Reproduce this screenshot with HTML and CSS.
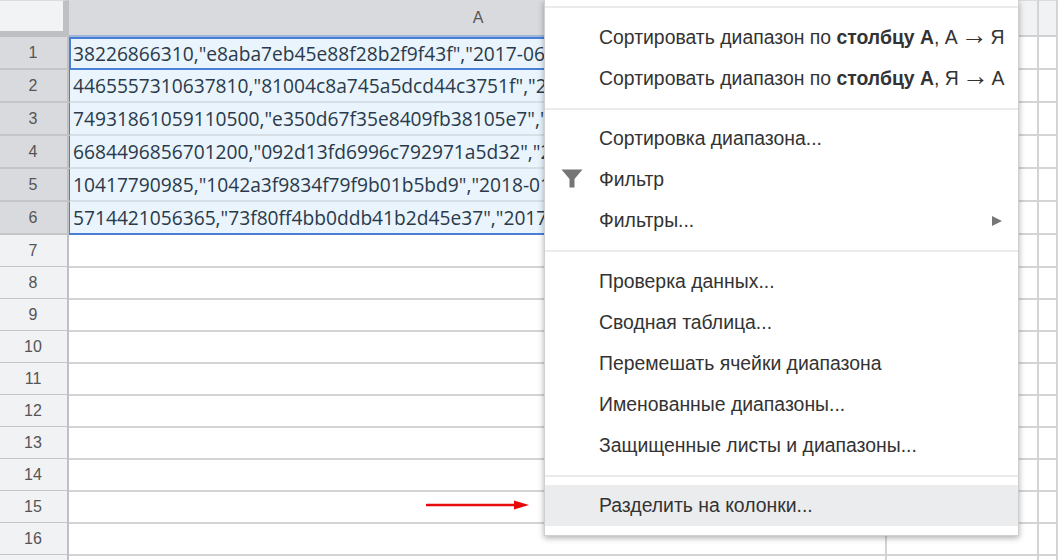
FILE: index.html
```html
<!DOCTYPE html>
<html lang="ru">
<head>
<meta charset="utf-8">
<title>Таблица</title>
<link rel="stylesheet" href="styles.css">
</head>
<body>
<div class="sheet">
  <div class="row row-head">
    <div class="corner"></div>
    <div class="col-head col-a selected">A</div>
    <div class="col-head col-b"></div>
    <div class="col-head col-c"></div>
  </div>
  <div class="row tall"><div class="num selected">1</div><div class="cell col-a sel active">38226866310,"e8aba7eb45e88f28b2f9f43f","2017-06</div><div class="cell col-b"></div><div class="cell col-c"></div></div>
  <div class="row tall"><div class="num selected">2</div><div class="cell col-a sel">4465557310637810,"81004c8a745a5dcd44c3751f","2</div><div class="cell col-b"></div><div class="cell col-c"></div></div>
  <div class="row tall"><div class="num selected">3</div><div class="cell col-a sel">74931861059110500,"e350d67f35e8409fb38105e7","</div><div class="cell col-b"></div><div class="cell col-c"></div></div>
  <div class="row tall"><div class="num selected">4</div><div class="cell col-a sel">6684496856701200,"092d13fd6996c792971a5d32","2</div><div class="cell col-b"></div><div class="cell col-c"></div></div>
  <div class="row tall"><div class="num selected">5</div><div class="cell col-a sel">10417790985,"1042a3f9834f79f9b01b5bd9","2018-01</div><div class="cell col-b"></div><div class="cell col-c"></div></div>
  <div class="row tall"><div class="num selected">6</div><div class="cell col-a sel last">5714421056365,"73f80ff4bb0ddb41b2d45e37","2017</div><div class="cell col-b"></div><div class="cell col-c"></div></div>
  <div class="row"><div class="num">7</div><div class="cell col-a"></div><div class="cell col-b"></div><div class="cell col-c"></div></div>
  <div class="row"><div class="num">8</div><div class="cell col-a"></div><div class="cell col-b"></div><div class="cell col-c"></div></div>
  <div class="row"><div class="num">9</div><div class="cell col-a"></div><div class="cell col-b"></div><div class="cell col-c"></div></div>
  <div class="row"><div class="num">10</div><div class="cell col-a"></div><div class="cell col-b"></div><div class="cell col-c"></div></div>
  <div class="row"><div class="num">11</div><div class="cell col-a"></div><div class="cell col-b"></div><div class="cell col-c"></div></div>
  <div class="row"><div class="num">12</div><div class="cell col-a"></div><div class="cell col-b"></div><div class="cell col-c"></div></div>
  <div class="row"><div class="num">13</div><div class="cell col-a"></div><div class="cell col-b"></div><div class="cell col-c"></div></div>
  <div class="row"><div class="num">14</div><div class="cell col-a"></div><div class="cell col-b"></div><div class="cell col-c"></div></div>
  <div class="row"><div class="num">15</div><div class="cell col-a"></div><div class="cell col-b"></div><div class="cell col-c"></div></div>
  <div class="row"><div class="num">16</div><div class="cell col-a"></div><div class="cell col-b"></div><div class="cell col-c"></div></div>
  <div class="row"><div class="num"></div><div class="cell col-a"></div><div class="cell col-b"></div><div class="cell col-c"></div></div>
</div>

<svg class="arrow" width="104" height="12" viewBox="0 0 104 12" aria-hidden="true">
  <line x1="1" y1="6" x2="90" y2="6" stroke="#e60a0a" stroke-width="2.6" stroke-linecap="round"/>
  <polygon points="88,1.5 103,6 88,10.5" fill="#e60a0a"/>
</svg>

<div class="menu">
  <div class="sep"></div>
  <div class="item">Сортировать диапазон по <b>столбцу А</b>, А <span class="to">→</span> Я</div>
  <div class="item">Сортировать диапазон по <b>столбцу А</b>, Я <span class="to">→</span> А</div>
  <div class="sep"></div>
  <div class="item">Сортировка диапазона...</div>
  <div class="item"><svg class="icon" width="22" height="19" viewBox="0 0 22 19" aria-hidden="true"><path d="M0.5 0.5H21.5L13.5 10V18.5H8.5V10Z" fill="#757575"/></svg>Фильтр</div>
  <div class="item">Фильтры...<span class="caret"></span></div>
  <div class="sep"></div>
  <div class="item">Проверка данных...</div>
  <div class="item">Сводная таблица...</div>
  <div class="item">Перемешать ячейки диапазона</div>
  <div class="item">Именованные диапазоны...</div>
  <div class="item">Защищенные листы и диапазоны...</div>
  <div class="sep"></div>
  <div class="item hover">Разделить на колонки...</div>
</div>
</body>
</html>
```
FILE: styles.css
```css
html, body {
  margin: 0;
  padding: 0;
  height: 100%;
  overflow: hidden;
  background: #fff;
}

.sheet {
  display: flex;
  flex-direction: column;
  width: 1058px;
  height: 560px;
  overflow: hidden;
}

.row {
  display: grid;
  grid-template-columns: 69px 818px 152px 19px;
  height: 32px;
  flex: none;
}
.row.tall { height: 33px; }
.row-head { height: 37px; }

.corner {
  background: #f2f3f5;
  border-right: 6px solid #bfc0c3;
  border-bottom: 6px solid #bfc0c3;
  border-top: 1px solid #dcdcdc;
  box-sizing: border-box;
}

.col-head {
  box-sizing: border-box;
  background: #f1f2f4;
  border-bottom: 2px solid #d0d1d3;
  border-right: 2px solid #d4d4d4;
  border-top: 1px solid #dcdcdc;
  color: #555;
  font: 16px/34px "Liberation Sans", sans-serif;
  text-align: center;
}
.col-head.selected {
  background: #d9dadd;
  border-bottom-color: #9fb6dc;
  padding-left: 2px;
}

.num {
  box-sizing: border-box;
  background: #f1f2f4;
  border-right: 2px solid #bfc0c3;
  border-bottom: 2px solid #c4c5c7;
  color: #555;
  font: 16px/31px "Liberation Sans", sans-serif;
  text-align: center;
  padding-right: 1px;
}
.num.selected {
  background: #d9dadd;
}

.cell {
  box-sizing: border-box;
  border-right: 2px solid #d4d4d4;
  border-bottom: 2px solid #d4d4d4;
  overflow: hidden;
  white-space: nowrap;
  padding-left: 4px;
  color: #2b3a4a;
  font: 19.2px/32px "Open Sans", sans-serif;
}
.cell.sel {
  background: #e9f4fd;
  border-left: 1px solid #4a7fd6;
  padding-left: 3px;
  border-bottom-color: #d7dfe6;
}
.cell.active {
  border: 2px solid #4a7fd6;
  padding-left: 2px;
  line-height: 30px;
}
.cell.last {
  border-bottom-color: #4a7fd6;
}

.arrow {
  position: absolute;
  left: 426px;
  top: 499px;
}

.menu {
  position: absolute;
  left: 544px;
  top: 0;
  width: 475px;
  box-sizing: border-box;
  padding: 6px 0 9px;
  background: #fff;
  border: 1px solid #d0d0d0;
  border-top: 0;
  box-shadow: 0 2px 6px rgba(0, 0, 0, .32);
  color: #333;
  font: 19.4px "Liberation Sans", sans-serif;
}

.sep {
  height: 2px;
  margin: 8.75px 0;
  background: #ebebeb;
}
.sep:first-child { margin-top: 0; }

.item {
  position: relative;
  height: 41px;
  line-height: 41px;
  padding-left: 54px;
  white-space: nowrap;
}
.item b { font-weight: 700; }
.item.hover { background: #ebecee; }

.to {
  font-size: 27px;
  line-height: 0;
  margin: 0 -2.5px;
}

.icon {
  position: absolute;
  left: 16px;
  top: 10px;
}

.caret {
  position: absolute;
  right: 16px;
  top: 16px;
  border-left: 10px solid #777;
  border-top: 5px solid transparent;
  border-bottom: 5px solid transparent;
}
```
